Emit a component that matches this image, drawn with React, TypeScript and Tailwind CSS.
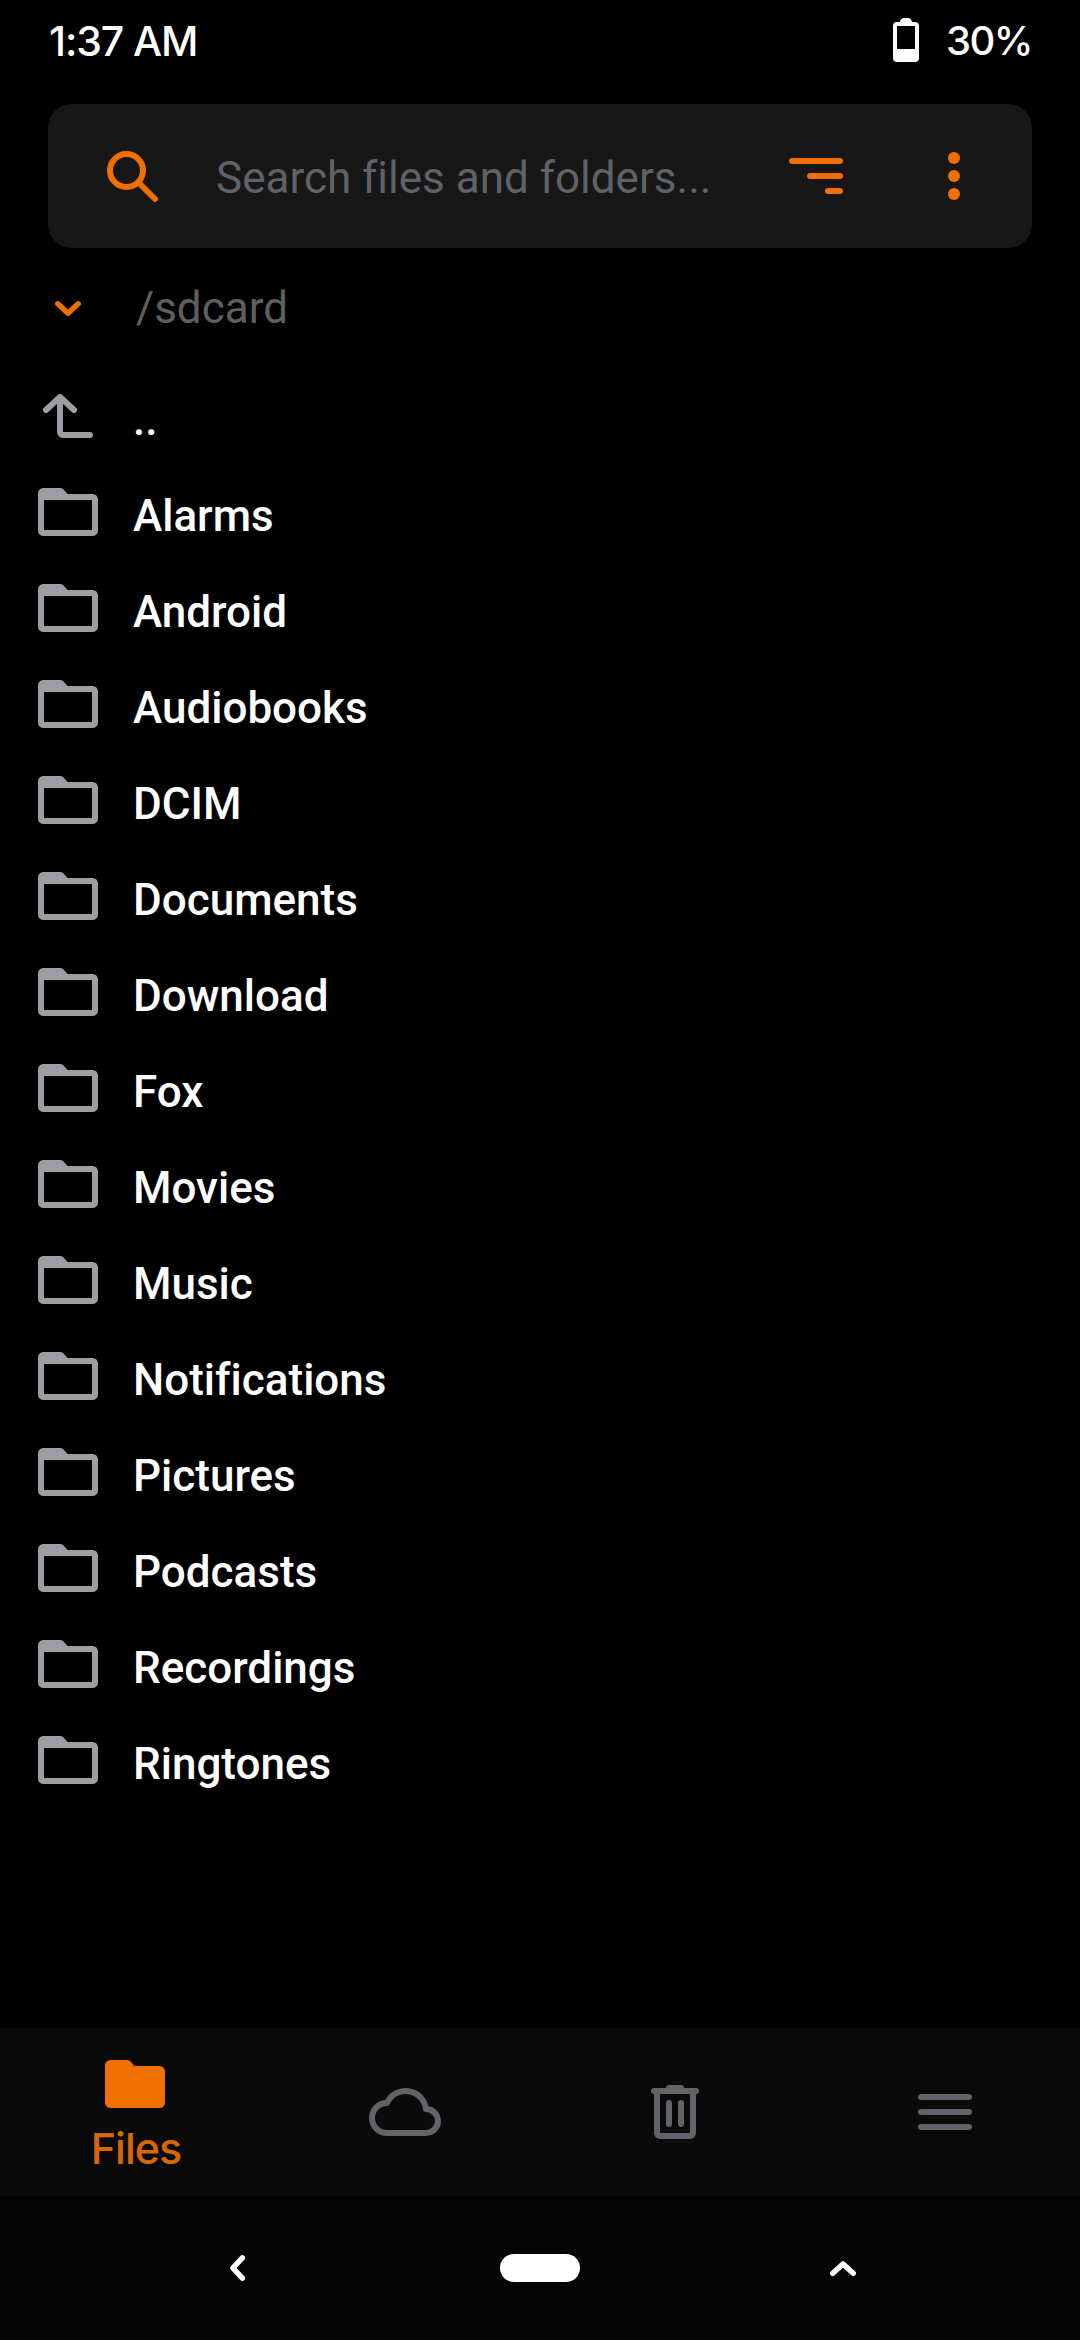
import React from 'react';

interface IconProps {
  className?: string;
  strokeWidth?: number;
}

const folders = [
  'Alarms',
  'Android',
  'Audiobooks',
  'DCIM',
  'Documents',
  'Download',
  'Fox',
  'Movies',
  'Music',
  'Notifications',
  'Pictures',
  'Podcasts',
  'Recordings',
  'Ringtones'
];

// Shared 72px stroke icon frame
const StrokeIcon: React.FC<React.PropsWithChildren<IconProps>> = ({
  className = '',
  strokeWidth = 6,
  children
}) => (
  <svg
    viewBox="0 0 72 72"
    fill="none"
    stroke="currentColor"
    strokeWidth={strokeWidth}
    strokeLinecap="round"
    strokeLinejoin="round"
    className={`size-18 shrink-0 ${className}`}
  >
    {children}
  </svg>
);

const FolderOutline: React.FC<IconProps> = ({ className = '' }) => (
  <svg viewBox="0 0 60 48" fill="currentColor" className={`w-15 h-12 shrink-0 ${className}`}>
    <path
      fillRule="evenodd"
      d="M5.5 0H21.5C23.5 0 24.7 .6 26 2L29.5 6H54.5A5.5 5.5 0 0 1 60 11.5V42.5A5.5 5.5 0 0 1 54.5 48H5.5A5.5 5.5 0 0 1 0 42.5V5.5A5.5 5.5 0 0 1 5.5 0ZM6 12V42H54V12Z"
    />
  </svg>
);

const FolderSolid: React.FC<IconProps> = ({ className = '' }) => (
  <svg viewBox="0 0 60 48" fill="currentColor" className={`w-15 h-12 shrink-0 ${className}`}>
    <path d="M5.5 0H21.5C23.5 0 24.7 .6 26 2L29.5 6H54.5A5.5 5.5 0 0 1 60 11.5V42.5A5.5 5.5 0 0 1 54.5 48H5.5A5.5 5.5 0 0 1 0 42.5V5.5A5.5 5.5 0 0 1 5.5 0Z" />
  </svg>
);

const Battery: React.FC = () => (
  <svg viewBox="0 0 26 44" fill="currentColor" className="w-[26px] h-11 shrink-0">
    <path
      fillRule="evenodd"
      d="M7 4C7.5 1.5 9 0 11 0H15C17 0 18.5 1.5 19 4H22A4 4 0 0 1 26 8V40A4 4 0 0 1 22 44H4A4 4 0 0 1 0 40V8A4 4 0 0 1 4 4ZM4 8V31H22V8Z"
    />
  </svg>
);

const StatusBar: React.FC = () => (
  <div className="flex h-[82px] items-center justify-between px-12 font-['Inter',sans-serif] font-medium leading-none text-white">
    <span className="pl-px text-[41px] tracking-[-1.1px]">1:37 AM</span>
    <div className="flex items-center gap-[27px]">
      <div className="-mt-0.5">
        <Battery />
      </div>
      <span className="text-[40px] tracking-[-1.5px]">30%</span>
    </div>
  </div>
);

const SearchBar: React.FC = () => (
  <div className="mx-12 mt-[22px] flex h-36 items-center rounded-3xl bg-[#171717] pl-12 pr-[42px] text-[#ef6f00]">
    <StrokeIcon>
      <circle cx="30.5" cy="30.5" r="16.5" />
      <path d="M42.5 42.5L59 59" />
    </StrokeIcon>
    <span className="ml-12 flex-1 pt-1 text-[44px] leading-none text-[#5f6267]">
      Search files and folders...
    </span>
    <StrokeIcon>
      <path d="M12 21H60M30 36H60M48 51H60" />
    </StrokeIcon>
    <svg viewBox="0 0 72 72" fill="currentColor" className="ml-[66px] size-18 shrink-0">
      <circle cx="36" cy="18" r="6" />
      <circle cx="36" cy="36" r="6" />
      <circle cx="36" cy="54" r="6" />
    </svg>
  </div>
);

const PathRow: React.FC = () => (
  <div className="mt-6 flex h-[100px] items-start gap-8 px-8">
    <StrokeIcon strokeWidth={5.5} className="text-[#ef6f00]">
      <path d="M25.8 31.8L36 41.2L46.2 31.8" />
    </StrokeIcon>
    <span className="text-[44px] leading-[72px] text-[#5f5f62]">/sdcard</span>
  </div>
);

const Row: React.FC<{ label: string; icon: React.ReactNode }> = ({ label, icon }) => (
  <li className="flex h-24 items-center gap-[29px] px-8">
    <div className="-mt-2 flex size-18 shrink-0 items-center justify-center text-[#9b9fa4]">
      {icon}
    </div>
    <span className="text-[44px] font-medium leading-none text-white">{label}</span>
  </li>
);

const TabBar: React.FC = () => (
  <nav className="grid h-[168px] grid-cols-4 bg-[#0a0a0a] text-[#606368]">
    <div className="flex flex-col items-center gap-4 pt-8">
      <FolderSolid className="text-[#ef6f00]" />
      <span className="pl-0.5 font-['Inter',sans-serif] text-[43px] font-medium leading-12 tracking-[-1px] text-[#d86807]">
        Files
      </span>
    </div>
    <div className="flex items-center justify-center">
      <StrokeIcon>
        <path d="M18 57H57A12 12 0 0 0 57 33A20.5 20.5 0 0 0 18 27A15 15 0 0 0 18 57Z" />
      </StrokeIcon>
    </div>
    <div className="flex items-center justify-center">
      <StrokeIcon>
        <path d="M15 15H57M18 15V57A3 3 0 0 0 21 60H51A3 3 0 0 0 54 57V15M30 27V48M42 27V48" />
        <path d="M30 12H42" />
      </StrokeIcon>
    </div>
    <div className="flex items-center justify-center">
      <StrokeIcon>
        <path d="M12 21H60M12 36H60M12 51H60" />
      </StrokeIcon>
    </div>
  </nav>
);

const SystemNav: React.FC = () => (
  <div className="flex h-36 items-center justify-between bg-[#040404] px-[202px] text-white">
    <StrokeIcon strokeWidth={5.5}>
      <path d="M40.3 25.8L30.9 36L40.3 46.2" />
    </StrokeIcon>
    <div className="h-7 w-20 rounded-full bg-white" />
    <StrokeIcon strokeWidth={5.5}>
      <path d="M26.8 41.3L37 31.9L47.2 41.3" />
    </StrokeIcon>
  </div>
);

export default function App() {
  return (
    <div className="flex h-[2340px] w-[1080px] flex-col overflow-hidden bg-black font-['Roboto',sans-serif] [font-variant-ligatures:none]">
      <StatusBar />
      <SearchBar />
      <PathRow />
      <ul className="flex-1">
        <Row
          label=".."
          icon={
            <StrokeIcon>
              <path d="M14 30L28 17L42 30M28 19V52A3 3 0 0 0 31 55H58" />
            </StrokeIcon>
          }
        />
        {folders.map((name) => (
          <Row key={name} label={name} icon={<FolderOutline />} />
        ))}
      </ul>
      <TabBar />
      <SystemNav />
    </div>
  );
}
